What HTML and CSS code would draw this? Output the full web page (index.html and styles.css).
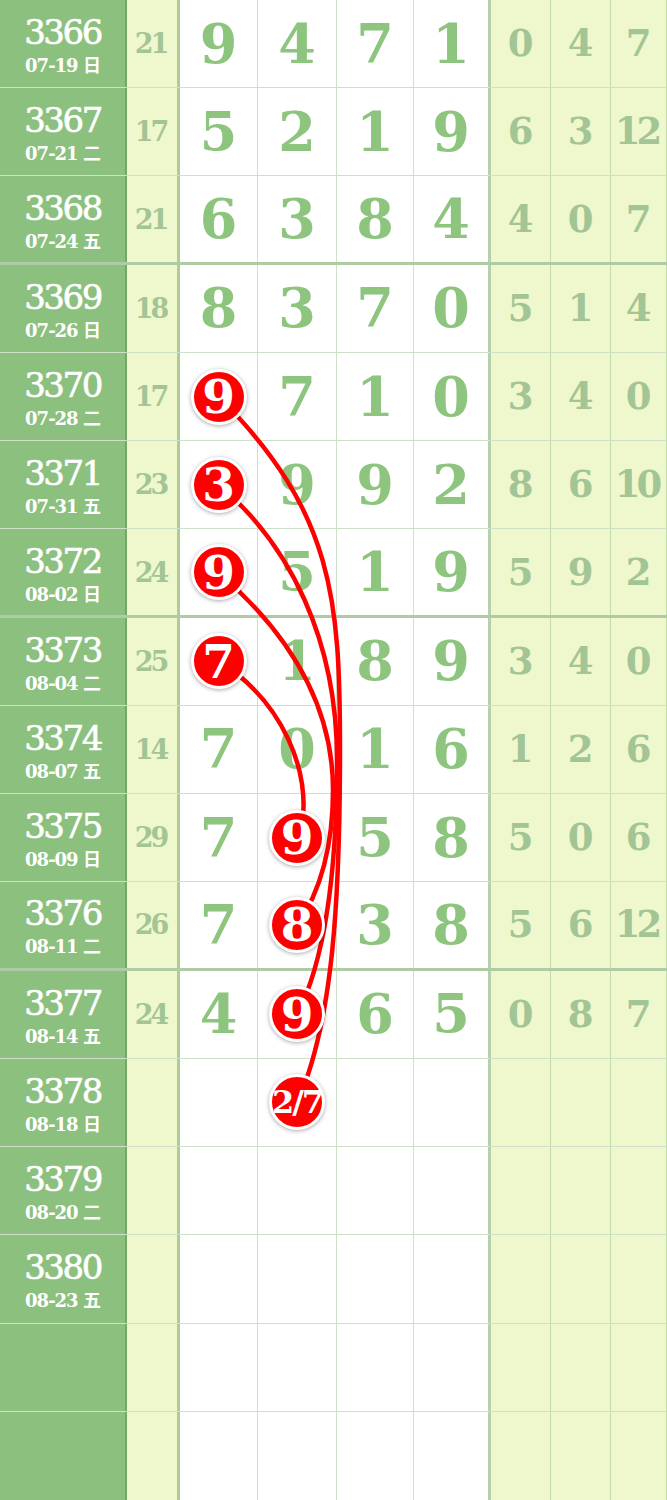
FILE: index.html
```html
<!DOCTYPE html>
<html lang="zh">
<head>
<meta charset="utf-8">
<title>走势图</title>
<link rel="stylesheet" href="styles.css">
</head>
<body>
<div class="board">
  <div class="row">
    <div class="cell period"><span class="pno">3366</span><span class="pdate">07-19 日</span></div>
    <div class="cell sum">21</div>
    <div class="cell num">9</div><div class="cell num">4</div><div class="cell num">7</div><div class="cell num num-end">1</div>
    <div class="cell stat">0</div><div class="cell stat">4</div><div class="cell stat">7</div>
  </div>
  <div class="row">
    <div class="cell period"><span class="pno">3367</span><span class="pdate">07-21 二</span></div>
    <div class="cell sum">17</div>
    <div class="cell num">5</div><div class="cell num">2</div><div class="cell num">1</div><div class="cell num num-end">9</div>
    <div class="cell stat">6</div><div class="cell stat">3</div><div class="cell stat">12</div>
  </div>
  <div class="row group-end">
    <div class="cell period"><span class="pno">3368</span><span class="pdate">07-24 五</span></div>
    <div class="cell sum">21</div>
    <div class="cell num">6</div><div class="cell num">3</div><div class="cell num">8</div><div class="cell num num-end">4</div>
    <div class="cell stat">4</div><div class="cell stat">0</div><div class="cell stat">7</div>
  </div>
  <div class="row">
    <div class="cell period"><span class="pno">3369</span><span class="pdate">07-26 日</span></div>
    <div class="cell sum">18</div>
    <div class="cell num">8</div><div class="cell num">3</div><div class="cell num">7</div><div class="cell num num-end">0</div>
    <div class="cell stat">5</div><div class="cell stat">1</div><div class="cell stat">4</div>
  </div>
  <div class="row">
    <div class="cell period"><span class="pno">3370</span><span class="pdate">07-28 二</span></div>
    <div class="cell sum">17</div>
    <div class="cell num"><span class="ball">9</span></div><div class="cell num">7</div><div class="cell num">1</div><div class="cell num num-end">0</div>
    <div class="cell stat">3</div><div class="cell stat">4</div><div class="cell stat">0</div>
  </div>
  <div class="row">
    <div class="cell period"><span class="pno">3371</span><span class="pdate">07-31 五</span></div>
    <div class="cell sum">23</div>
    <div class="cell num"><span class="ball">3</span></div><div class="cell num">9</div><div class="cell num">9</div><div class="cell num num-end">2</div>
    <div class="cell stat">8</div><div class="cell stat">6</div><div class="cell stat">10</div>
  </div>
  <div class="row group-end">
    <div class="cell period"><span class="pno">3372</span><span class="pdate">08-02 日</span></div>
    <div class="cell sum">24</div>
    <div class="cell num"><span class="ball">9</span></div><div class="cell num">5</div><div class="cell num">1</div><div class="cell num num-end">9</div>
    <div class="cell stat">5</div><div class="cell stat">9</div><div class="cell stat">2</div>
  </div>
  <div class="row">
    <div class="cell period"><span class="pno">3373</span><span class="pdate">08-04 二</span></div>
    <div class="cell sum">25</div>
    <div class="cell num"><span class="ball">7</span></div><div class="cell num">1</div><div class="cell num">8</div><div class="cell num num-end">9</div>
    <div class="cell stat">3</div><div class="cell stat">4</div><div class="cell stat">0</div>
  </div>
  <div class="row">
    <div class="cell period"><span class="pno">3374</span><span class="pdate">08-07 五</span></div>
    <div class="cell sum">14</div>
    <div class="cell num">7</div><div class="cell num">0</div><div class="cell num">1</div><div class="cell num num-end">6</div>
    <div class="cell stat">1</div><div class="cell stat">2</div><div class="cell stat">6</div>
  </div>
  <div class="row">
    <div class="cell period"><span class="pno">3375</span><span class="pdate">08-09 日</span></div>
    <div class="cell sum">29</div>
    <div class="cell num">7</div><div class="cell num"><span class="ball">9</span></div><div class="cell num">5</div><div class="cell num num-end">8</div>
    <div class="cell stat">5</div><div class="cell stat">0</div><div class="cell stat">6</div>
  </div>
  <div class="row group-end">
    <div class="cell period"><span class="pno">3376</span><span class="pdate">08-11 二</span></div>
    <div class="cell sum">26</div>
    <div class="cell num">7</div><div class="cell num"><span class="ball">8</span></div><div class="cell num">3</div><div class="cell num num-end">8</div>
    <div class="cell stat">5</div><div class="cell stat">6</div><div class="cell stat">12</div>
  </div>
  <div class="row">
    <div class="cell period"><span class="pno">3377</span><span class="pdate">08-14 五</span></div>
    <div class="cell sum">24</div>
    <div class="cell num">4</div><div class="cell num"><span class="ball">9</span></div><div class="cell num">6</div><div class="cell num num-end">5</div>
    <div class="cell stat">0</div><div class="cell stat">8</div><div class="cell stat">7</div>
  </div>
  <div class="row">
    <div class="cell period"><span class="pno">3378</span><span class="pdate">08-18 日</span></div>
    <div class="cell sum"></div>
    <div class="cell num"></div><div class="cell num"><span class="ball ball-small">2/7</span></div><div class="cell num"></div><div class="cell num num-end"></div>
    <div class="cell stat"></div><div class="cell stat"></div><div class="cell stat"></div>
  </div>
  <div class="row">
    <div class="cell period"><span class="pno">3379</span><span class="pdate">08-20 二</span></div>
    <div class="cell sum"></div>
    <div class="cell num"></div><div class="cell num"></div><div class="cell num"></div><div class="cell num num-end"></div>
    <div class="cell stat"></div><div class="cell stat"></div><div class="cell stat"></div>
  </div>
  <div class="row">
    <div class="cell period"><span class="pno">3380</span><span class="pdate">08-23 五</span></div>
    <div class="cell sum"></div>
    <div class="cell num"></div><div class="cell num"></div><div class="cell num"></div><div class="cell num num-end"></div>
    <div class="cell stat"></div><div class="cell stat"></div><div class="cell stat"></div>
  </div>
  <div class="row">
    <div class="cell period"></div>
    <div class="cell sum"></div>
    <div class="cell num"></div><div class="cell num"></div><div class="cell num"></div><div class="cell num num-end"></div>
    <div class="cell stat"></div><div class="cell stat"></div><div class="cell stat"></div>
  </div>
  <div class="row last">
    <div class="cell period"></div>
    <div class="cell sum"></div>
    <div class="cell num"></div><div class="cell num"></div><div class="cell num"></div><div class="cell num num-end"></div>
    <div class="cell stat"></div><div class="cell stat"></div><div class="cell stat"></div>
  </div>

  <svg class="links" width="667" height="1500" viewBox="0 0 667 1500">
    <path d="M219 397 C334 512 340 600 340 750 C340 900 333 1023 297 1103"/>
    <path d="M219 485 C290 545 337 640 337 760 C337 870 325 960 297 1015"/>
    <path d="M219 573 C285 630 333 700 333 790 C333 850 318 895 297 926"/>
    <path d="M219 661 C280 700 315 770 300 838"/>
  </svg>
</div>
</body>
</html>
```
FILE: styles.css
```css
* {
  box-sizing: border-box;
  margin: 0;
  padding: 0;
}

body {
  margin: 0;
  background: #ffffff;
  font-family: "DejaVu Serif", "Noto Sans CJK SC", serif;
}

.board {
  position: relative;
  width: 667px;
  height: 1500px;
  display: grid;
  grid-template-rows: repeat(17, 1fr);
  overflow: hidden;
}

.row {
  display: grid;
  grid-template-columns: 127px 53px 78px 79px 77px 77px 60px 60px 56px;
  border-bottom: 1px solid rgba(110, 160, 90, 0.33);
}

.row.group-end {
  border-bottom: 3px solid rgba(110, 160, 90, 0.55);
}

.row.last {
  border-bottom: none;
}

.cell {
  display: flex;
  align-items: center;
  justify-content: center;
  border-right: 1px solid rgba(110, 160, 90, 0.33);
  font-weight: bold;
  line-height: 1;
}

.period {
  flex-direction: column;
  padding-top: 5px;
  background: #8cc07f;
  color: #ffffff;
  border-right: 2px solid rgba(90, 140, 70, 0.45);
}

.pno {
  font-size: 34px;
  font-weight: normal;
  letter-spacing: -2.5px;
  line-height: 36px;
  -webkit-text-stroke: 0.6px #ffffff;
}

.pdate {
  font-size: 18px;
  font-weight: bold;
  letter-spacing: -1px;
  line-height: 24px;
  margin-top: 4px;
}

.sum {
  background: #eff8cc;
  color: #a3c596;
  font-size: 27px;
  letter-spacing: -3px;
  padding-right: 3px;
  border-right: 3px solid rgba(110, 160, 90, 0.5);
}

.num {
  background: #ffffff;
  color: #8dc47e;
  font-size: 54px;
}

.num-end {
  border-right: 3px solid rgba(110, 160, 90, 0.5);
}

.stat {
  background: #eff8cc;
  color: #a3c596;
  font-size: 37px;
  letter-spacing: -4px;
  padding-right: 4px;
}

.ball {
  position: relative;
  z-index: 2;
  width: 56px;
  height: 56px;
  flex: none;
  border-radius: 50%;
  background: #ff0000;
  border: 3px solid #ffffff;
  box-shadow: 0 1px 4px rgba(0, 0, 0, 0.35);
  color: #ffffff;
  font-size: 47px;
  font-weight: bold;
  display: flex;
  align-items: center;
  justify-content: center;
  line-height: 1;
}

.ball-small {
  font-size: 32px;
  letter-spacing: -2px;
}

.links {
  position: absolute;
  top: 0;
  left: 0;
  z-index: 1;
  pointer-events: none;
}

.links path {
  fill: none;
  stroke: #ff0000;
  stroke-width: 4.5;
}
```
